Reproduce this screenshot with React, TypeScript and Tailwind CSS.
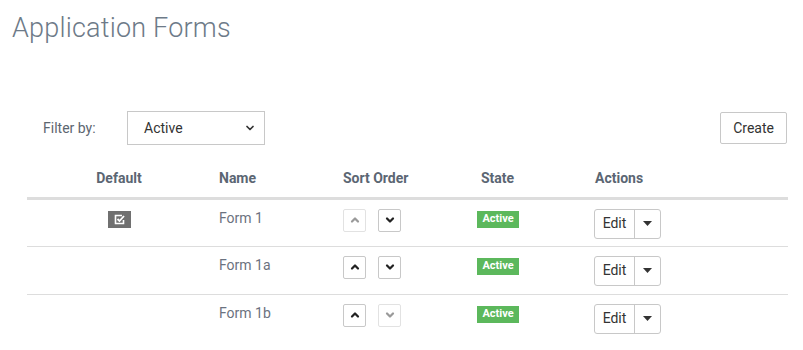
import { ChevronDown, ChevronUp } from 'lucide-react';

const rows = [
  { name: 'Form 1', isDefault: true, canUp: false, canDown: true },
  { name: 'Form 1a', isDefault: false, canUp: true, canDown: true },
  { name: 'Form 1b', isDefault: false, canUp: true, canDown: false },
];

function SortButton({ dir, enabled }: { dir: 'up' | 'down'; enabled: boolean }) {
  const Icon = dir === 'up' ? ChevronUp : ChevronDown;
  return (
    <button
      className={
        'w-[23px] h-[23px] flex items-center justify-center rounded-[2px] border bg-white ' +
        (enabled ? 'border-[#c8c8c8] text-[#222]' : 'border-[#e2e2e2] text-[#9a9a9a]')
      }
    >
      <Icon className="w-[12px] h-[12px]" strokeWidth={4.5} />
    </button>
  );
}

function DefaultIcon() {
  return (
    <div className="w-[23px] h-[17px] bg-[#707070] flex items-center justify-center">
      <svg width="11" height="11" viewBox="0 0 11 11" fill="none">
        <path d="M8 1.5H1.5v8h8V6" stroke="white" strokeWidth="1.6" />
        <path d="M3.5 5l2 2 4.5-5" stroke="white" strokeWidth="1.8" />
      </svg>
    </div>
  );
}

export default function App() {
  return (
    <div className="w-[803px] h-[350px] bg-white overflow-hidden font-['Roboto',sans-serif]">
      <h1 className="pl-[12px] pt-[10px] text-[27px] leading-[36px] font-light text-[#6d7a88] tracking-[0.2px]">
        Application Forms
      </h1>

      <div className="pl-[27px] pr-[15px] mt-[65px]">
        <div className="flex items-center justify-between">
          <div className="flex items-center">
            <span className="ml-[16px] w-[84px] text-[14px] text-[#5c6670]">Filter by:</span>
            <div className="w-[138px] h-[34px] border border-[#c8c8c8] flex items-center justify-between pl-[16px] pr-[8px] text-[14px] text-[#333]">
              <span>Active</span>
              <ChevronDown className="w-[12px] h-[12px] text-[#333]" strokeWidth={3.5} />
            </div>
          </div>
          <button className="h-[32px] px-[12px] border border-[#c8c8c8] rounded-[2px] text-[14px] text-[#333] bg-white mr-[1px]">
            Create
          </button>
        </div>

        <table className="w-[761px] mt-[16px] border-collapse text-[14px]">
          <thead>
            <tr className="h-[37px] border-b-[3px] border-[#dddddd] text-[#5b6673] font-bold">
              <th className="w-[184px] text-center font-bold">Default</th>
              <th className="w-[124px] text-left pl-[8px] font-bold">Name</th>
              <th className="w-[138px] text-left pl-[8px] font-bold">Sort Order</th>
              <th className="w-[114px] text-left pl-[8px] font-bold">State</th>
              <th className="text-left pl-[8px] font-bold">Actions</th>
            </tr>
          </thead>
          <tbody>
            {rows.map((r, i) => (
              <tr
                key={r.name}
                className={'h-[48px] align-top ' + (i < rows.length - 1 ? 'border-b border-[#dddddd]' : '')}
              >
                <td className="pt-[11px]">
                  <div className="flex justify-center">{r.isDefault && <DefaultIcon />}</div>
                </td>
                <td className="pl-[8px] pt-[8px] text-[#6b7280] leading-[20px]">{r.name}</td>
                <td className="pl-[8px] pt-[9px]">
                  <div className="flex gap-[12px]">
                    <SortButton dir="up" enabled={r.canUp} />
                    <SortButton dir="down" enabled={r.canDown} />
                  </div>
                </td>
                <td className="pl-[4px] pt-[11px]">
                  <div className="flex">
                    <span className="flex items-center justify-center w-[42px] h-[17px] bg-[#5cb85c] text-white text-[11px] font-bold">
                      Active
                    </span>
                  </div>
                </td>
                <td className="pl-[7px] pt-[9px]">
                  <div className="flex">
                    <div className="flex h-[30px] border border-[#c8c8c8] rounded-[3px]">
                      <span className="w-[40px] flex items-center justify-center text-[14px] text-[#333] border-r border-[#c8c8c8]">
                        Edit
                      </span>
                      <span className="w-[25px] flex items-center justify-center">
                        <svg width="9" height="5" viewBox="0 0 9 5">
                          <path d="M0 0h9L4.5 5z" fill="#333" />
                        </svg>
                      </span>
                    </div>
                  </div>
                </td>
              </tr>
            ))}
          </tbody>
        </table>
      </div>
    </div>
  );
}
